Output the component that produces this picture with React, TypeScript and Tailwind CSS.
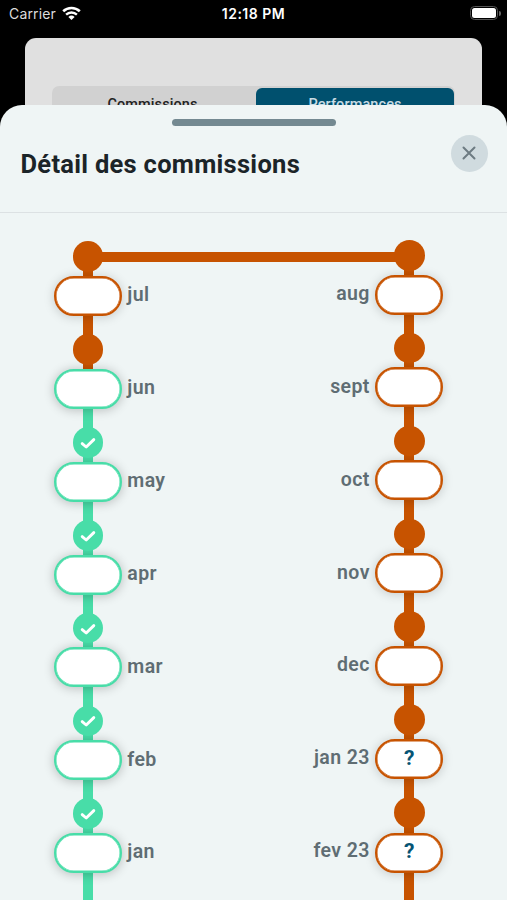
import React from 'react';
import { clsx } from 'clsx';

type Status = 'paid' | 'pending';

interface Month {
  label: string;
  dot: Status;
  pill: Status;
  value?: string;
}

const pastMonths: Month[] = [
  { label: 'jul', dot: 'pending', pill: 'pending' },
  { label: 'jun', dot: 'pending', pill: 'paid' },
  { label: 'may', dot: 'paid', pill: 'paid' },
  { label: 'apr', dot: 'paid', pill: 'paid' },
  { label: 'mar', dot: 'paid', pill: 'paid' },
  { label: 'feb', dot: 'paid', pill: 'paid' },
  { label: 'jan', dot: 'paid', pill: 'paid' },
];

const nextMonths: Month[] = [
  { label: 'aug', dot: 'pending', pill: 'pending' },
  { label: 'sept', dot: 'pending', pill: 'pending' },
  { label: 'oct', dot: 'pending', pill: 'pending' },
  { label: 'nov', dot: 'pending', pill: 'pending' },
  { label: 'dec', dot: 'pending', pill: 'pending' },
  { label: 'jan 23', dot: 'pending', pill: 'pending', value: '?' },
  { label: 'fev 23', dot: 'pending', pill: 'pending', value: '?' },
];

const fill: Record<Status, string> = {
  paid: 'bg-[#48dda8]',
  pending: 'bg-[#c75300]',
};

const StatusBar: React.FC = () => (
  <div className="grid h-[38px] grid-cols-3 items-start px-[9px] pt-[5px] font-['Inter',sans-serif] text-white">
    <div className="flex items-center gap-[6px]">
      <span className="text-[14px] leading-[18px] tracking-[0.15px] text-[#dcdcdc]">Carrier</span>
      <svg className="-mt-[2px] h-[14px] w-[19px]" viewBox="0 0 19 14" fill="none">
        <path d="M1.2 5.3a12 12 0 0 1 16.6 0" stroke="#fff" strokeWidth="2.6" />
        <path d="M4.1 8.7a7.8 7.8 0 0 1 10.8 0" stroke="#fff" strokeWidth="2.4" />
        <path d="M9.5 14 6.4 10.9a4.5 4.5 0 0 1 6.2 0z" fill="#fff" />
      </svg>
    </div>
    <span className="text-center text-[14px] font-semibold leading-[18px] tracking-[0.5px]">12:18 PM</span>
    <div className="-mr-[3px] flex items-center justify-end gap-px pt-px">
      <div className="h-[14px] w-[28px] rounded-[4.5px] border-[1.5px] border-[#555] p-px">
        <div className="h-full rounded-[2.5px] bg-white" />
      </div>
      <div className="h-[5px] w-[2px] rounded-r-full bg-[#666]" />
    </div>
  </div>
);

const MonthRow: React.FC<{ month: Month; reverse?: boolean }> = ({ month, reverse }) => (
  <div className={clsx('flex h-[92.85px] shrink-0 last:h-[104px]', reverse && 'flex-row-reverse')}>
    <div className="flex w-[68px] shrink-0 flex-col items-center">
      <div className={clsx('z-20 flex size-[30.6px] shrink-0 items-center justify-center rounded-full', fill[month.dot])}>
        {month.dot === 'paid' && (
          <svg className="mt-px h-[12px] w-[16px]" viewBox="0 0 16 12" fill="none">
            <path d="M2.2 6.6 6.2 10 13.8 2.6" stroke="#fff" strokeWidth="2.9" strokeLinecap="round" strokeLinejoin="round" />
          </svg>
        )}
      </div>
      <div className={clsx('-mt-[2px] h-[7px] w-[9.8px] shrink-0', fill[month.dot])} />
      <div
        className={clsx(
          'z-10 -mt-px flex h-[40px] w-full shrink-0 items-center justify-center rounded-full border-2 bg-white pb-px font-bold text-[21px] text-[#065474]',
          month.pill === 'paid'
            ? 'border-[#48dda8] shadow-[inset_0_0_0_0.5px_#48dda8,0_1px_11px_rgba(0,0,0,0.24)]'
            : 'border-[#c75300] shadow-[inset_0_0_0_0.5px_#c75300,0_1px_11px_rgba(0,0,0,0.18)]',
          month.label === 'fev 23' && 'translate-y-px'
        )}
      >
        {month.value}
      </div>
      <div className={clsx('-mt-px -mb-[3px] w-[9.8px] grow', fill[month.pill])} />
    </div>
    <span
      className={clsx(
        'mt-[41px] text-[19.5px] font-semibold leading-[26px] tracking-[0.4px] text-[#5f6d73]',
        reverse ? 'pr-[5.5px] text-right' : 'pl-[5.5px]'
      )}
    >
      {month.label}
    </span>
  </div>
);

const App: React.FC = () => {
  return (
    <div className="flex h-[900px] w-[507px] flex-col overflow-hidden bg-black font-['Roboto',sans-serif]">
      <StatusBar />

      {/* Screen behind the sheet */}
      <div className="mx-[25px] h-[67px] shrink-0 rounded-t-[11px] bg-[#e0e0e0] px-[27px] pt-[48px]">
        <div className="flex h-[19px] rounded-t-[7px] bg-[#d1d1d1] pt-[2px] pr-px text-center text-[14.5px] font-medium leading-[34px] tracking-[0.1px]">
          <div className="w-[204px] shrink-0 pr-[3px] text-[#222]">Commissions</div>
          <div className="h-[30px] flex-1 rounded-t-[6px] bg-[#00506e] text-[#c9dce4]">Performances</div>
        </div>
      </div>

      {/* Bottom sheet */}
      <div className="z-10 flex min-h-0 flex-1 flex-col rounded-t-[22px] bg-[#eff5f5]">
        <div className="flex h-[107.5px] shrink-0 flex-col border-b-[1.5px] border-[#dce1e3]">
          <div className="mt-[14px] h-[6.5px] w-[164px] self-center rounded-full bg-[#748991]" />
          <div className="flex items-start justify-between pl-[20.5px] pr-[19.5px]">
            <h1 className="mt-[21px] text-[25.5px] font-bold leading-[34px] tracking-[0.28px] text-[#1b2428]">Détail des commissions</h1>
            <button className="mt-[9px] flex size-[37px] items-center justify-center rounded-full bg-[#d0dbdf]">
              <svg className="size-[14px]" viewBox="0 0 14 14" fill="none">
                <path d="m1.5 1.5 11 11m0-11-11 11" stroke="#6d7b82" strokeWidth="2" strokeLinecap="round" />
              </svg>
            </button>
          </div>
        </div>

        <div className="flex min-h-0 flex-1 items-start overflow-hidden pl-[53.8px] pr-[63.7px] pt-[27.5px]">
          <div className="z-10 mt-[1.4px] flex w-[68px] shrink-0 flex-col">
            {pastMonths.map((m) => (
              <MonthRow key={m.label} month={m} />
            ))}
          </div>
          <div className="-mx-[24px] mt-[12px] h-[9.6px] flex-1 bg-[#c75300]" />
          <div className="z-10 flex w-[68px] shrink-0 flex-col whitespace-nowrap">
            {nextMonths.map((m) => (
              <MonthRow key={m.label} month={m} reverse />
            ))}
          </div>
        </div>
      </div>
    </div>
  );
};

export default App;
